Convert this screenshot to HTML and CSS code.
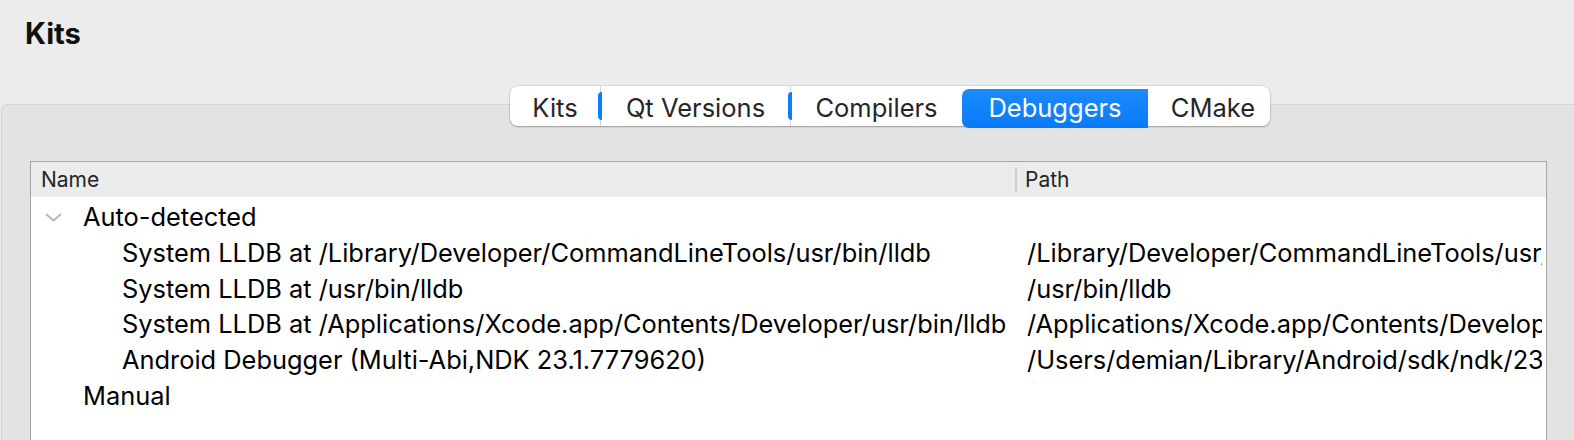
FILE: index.html
```html
<!DOCTYPE html>
<html>
<head>
<meta charset="utf-8">
<link rel="stylesheet" href="styles.css">
</head>
<body>
<div class="window">
  <div class="title">Kits</div>
  <div class="pane">
    <div class="tabbar">
      <div class="tab tab-kits">Kits</div>
      <div class="tab tab-qt sliver">Qt Versions</div>
      <div class="tab tab-comp sliver">Compilers</div>
      <div class="tab tab-dbg active">Debuggers</div>
      <div class="tab tab-cmake">CMake</div>
    </div>
    <div class="tree">
      <div class="header">
        <div class="hname">Name</div>
        <div class="hsep"></div>
        <div class="hpath">Path</div>
      </div>
      <div class="rows">
        <div class="row">
          <div class="cname expander"><svg class="chev" width="17" height="9" viewBox="0 0 17 9"><path d="M1.5 1.5 L8.5 7.5 L15.5 1.5" fill="none" stroke="#b4b4b4" stroke-width="1.8" stroke-linecap="round" stroke-linejoin="round"/></svg>Auto-detected</div>
          <div class="cpath"></div>
        </div>
        <div class="row">
          <div class="cname child">System LLDB at /Library/Developer/CommandLineTools/usr/bin/lldb</div>
          <div class="cpath">/Library/Developer/CommandLineTools/usr/bin/lldb</div>
        </div>
        <div class="row">
          <div class="cname child">System LLDB at /usr/bin/lldb</div>
          <div class="cpath">/usr/bin/lldb</div>
        </div>
        <div class="row">
          <div class="cname child">System LLDB at /Applications/Xcode.app/Contents/Developer/usr/bin/lldb</div>
          <div class="cpath">/Applications/Xcode.app/Contents/Developer/usr/bin/lldb</div>
        </div>
        <div class="row">
          <div class="cname child">Android Debugger (Multi-Abi,NDK 23.1.7779620)</div>
          <div class="cpath">/Users/demian/Library/Android/sdk/ndk/23.1.7779620/prebuilt/darwin-x86_64/bin/gdb</div>
        </div>
        <div class="row">
          <div class="cname group">Manual</div>
          <div class="cpath"></div>
        </div>
      </div>
    </div>
  </div>
</div>
</body>
</html>
```
FILE: styles.css
```css
html, body {
  margin: 0;
  padding: 0;
}
body {
  width: 1574px;
  height: 440px;
  overflow: hidden;
  background: #ececec;
  font-family: "Inter", "Liberation Sans", sans-serif;
  color: #000;
}
.window {
  display: flex;
  flex-direction: column;
}
.title {
  font-weight: 700;
  font-size: 29.2px;
  line-height: 38px;
  height: 104px;
  box-sizing: border-box;
  padding: 15px 0 0 25px;
  color: #111;
}
.pane {
  margin-left: 1px;
  background: #e3e3e3;
  border-top: 1px solid #d3d3d3;
  border-left: 1px solid #d3d3d3;
  border-top-left-radius: 7px;
  height: 400px;
}
.tabbar {
  display: flex;
  align-items: stretch;
  height: 40px;
  margin: -19px 0 0 508px;
  width: 760px;
  background: #fff;
  border-radius: 8px;
  box-shadow: 0 1px 2px rgba(0,0,0,0.28), 0 0 0 0.5px rgba(0,0,0,0.12);
}
.tab {
  position: relative;
  display: flex;
  align-items: center;
  justify-content: center;
  font-size: 25.5px;
  color: #262626;
  box-sizing: border-box;
  padding-top: 2px;
}
.tab-kits { width: 90px; }
.tab-qt { width: 190px; border-left: 1.5px solid #d4d4d4; }
.tab-comp { width: 172px; border-left: 1.5px solid #d4d4d4; }
.tab-dbg { width: 186px; }
.tab-cmake { width: 122px; padding-left: 8px; }
.sliver::before {
  content: "";
  position: absolute;
  left: -3px;
  top: 6px;
  width: 4px;
  height: 28px;
  background: #0a7ffb;
  border-radius: 5px 0 0 5px;
}
.tab.active {
  margin: 3px 0 -2px;
  color: #fff;
  background: linear-gradient(#1b8bff, #0a79f7);
  border-radius: 7px 0 0 7px;
  padding-top: 0;
  padding-bottom: 2px;
}
.tree {
  margin: 35px 0 0 28px;
  width: 1517px;
  height: 300px;
  box-sizing: border-box;
  border: 1px solid #a4a4a4;
  background: #fff;
  overflow: hidden;
}
.header {
  display: flex;
  align-items: center;
  height: 35px;
  line-height: 35px;
  background: #ececec;
  font-size: 21px;
  color: #262626;
}
.hname {
  width: 984px;
  box-sizing: border-box;
  padding-left: 10px;
}
.hsep {
  width: 2px;
  height: 25px;
  background: #cfcfcf;
}
.hpath {
  padding-left: 8px;
}
.rows {
  display: flex;
  flex-direction: column;
  width: 1511px;
  overflow: hidden;
  padding-top: 2px;
}
.row {
  display: flex;
  height: 35.8px;
  line-height: 35.8px;
  align-items: center;
  font-size: 25.4px;
  white-space: nowrap;
}
.cname {
  width: 996px;
  flex: none;
  box-sizing: border-box;
  display: flex;
  align-items: center;
}
.expander {
  padding-left: 14px;
}
.chev {
  flex: none;
  margin-right: 21px;
  margin-top: 2px;
}
.group {
  padding-left: 52px;
}
.child {
  padding-left: 91px;
}
.cpath {
  flex: none;
}
```
